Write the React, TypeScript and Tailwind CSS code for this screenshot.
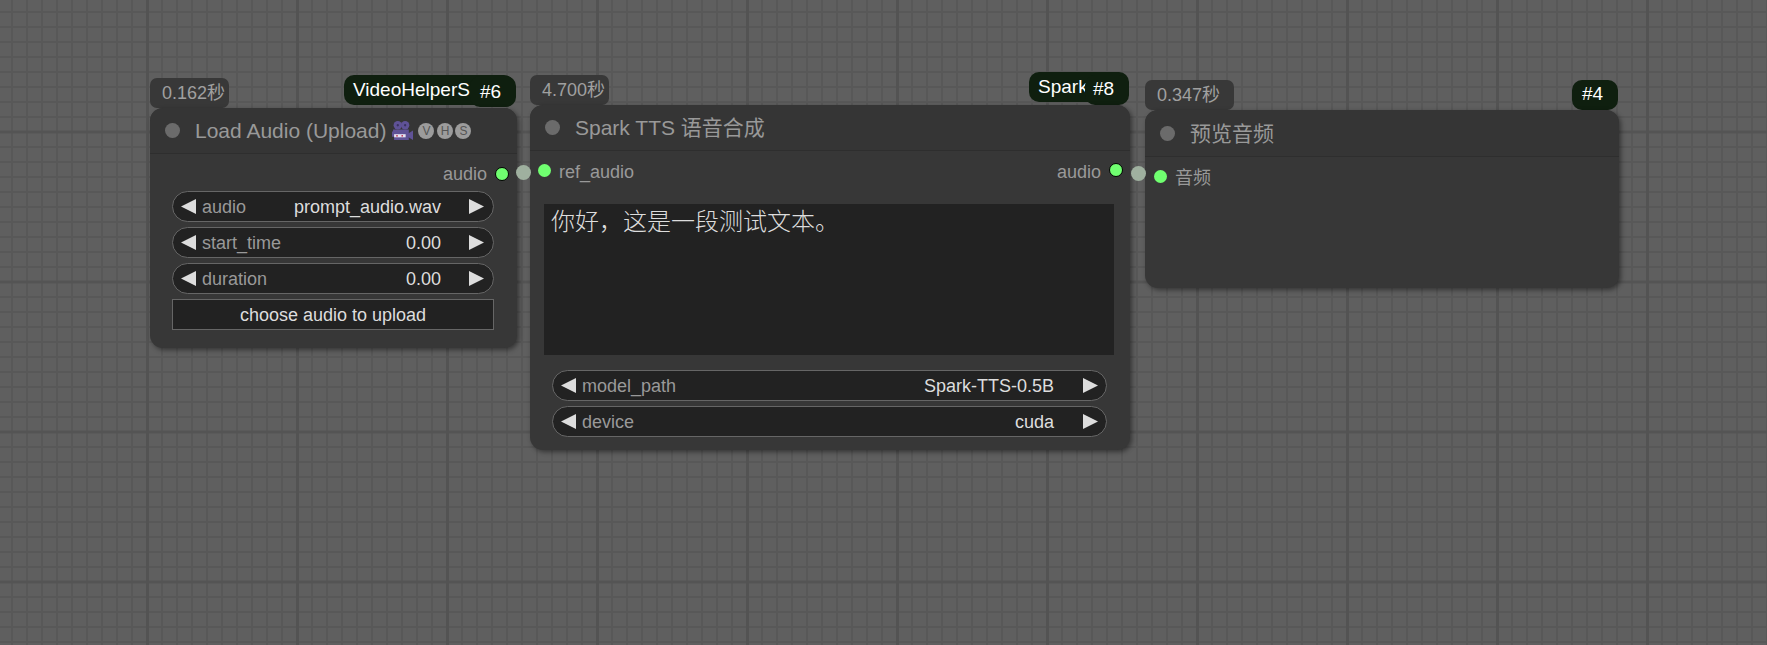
import React from "react";

const sans = "font-['Liberation_Sans','Noto_Sans_CJK_SC',sans-serif]";

function Tri({ dir }: { dir: "l" | "r" }) {
  return (
    <svg width="15" height="15" viewBox="0 0 15 15" className="shrink-0">
      <polygon points={dir === "l" ? "0,7.5 15,0 15,15" : "0,0 15,7.5 0,15"} fill="#dddddd" />
    </svg>
  );
}

function Widget({ label, value, wide }: { label: string; value: string; wide?: boolean }) {
  return (
    <div
      className={
        wide
          ? "flex h-[31px] items-center rounded-full border-[1.5px] border-[#666] bg-[#222] pl-[8px] pr-[8px] text-[18px] leading-none"
          : "flex h-[31px] items-center rounded-full border-[1.5px] border-[#666] bg-[#222] pl-[8px] pr-[9px] text-[18px] leading-none"
      }
    >
      <Tri dir="l" />
      <span className="ml-[6px] flex-1 text-[#999]">{label}</span>
      <span className={wide ? "mr-[29px] text-[#ddd]" : "mr-[28px] text-[#ddd]"}>{value}</span>
      <Tri dir="r" />
    </div>
  );
}

function Dot({ ring }: { ring?: boolean }) {
  return (
    <span
      className={
        ring
          ? "block size-[14px] shrink-0 rounded-full border-[1.5px] border-black bg-[#70ff70]"
          : "block size-[13px] shrink-0 rounded-full bg-[#70ff70]"
      }
    />
  );
}

function Node({
  className,
  title,
  headerH,
  extra,
  children,
}: {
  className: string;
  title: string;
  headerH: string;
  extra?: React.ReactNode;
  children?: React.ReactNode;
}) {
  return (
    <div className={`absolute rounded-[13px] bg-[#373737] shadow-[2px_2px_5px_rgba(0,0,0,0.45)] ${className}`}>
      <div className={`flex items-center rounded-t-[13px] border-b-[1.5px] border-[#2e2e2e] bg-[#353535] pl-[15px] ${headerH}`}>
        <span className="size-[15px] shrink-0 rounded-full bg-[#6b6b6b]" />
        <span className="ml-[15px] whitespace-nowrap text-[21px] leading-none text-[#999]">{title}</span>
        {extra}
      </div>
      {children}
    </div>
  );
}

function TimeBadge({ className, text }: { className: string; text: string }) {
  return (
    <div className={`absolute flex h-[30px] items-center rounded-[7px] bg-[#383838] pl-[12px] text-[18px] leading-none whitespace-nowrap text-[#a0a0a0] ${className}`}>
      {text}
    </div>
  );
}

function IdBadge({ className, text }: { className: string; text: string }) {
  return (
    <div className={`absolute flex items-center rounded-[10px] bg-[#0f1f0f] text-[19px] leading-none whitespace-nowrap text-white ${className}`}>
      {text}
    </div>
  );
}

function Camera() {
  return (
    <svg width="21" height="19" viewBox="0 0 20 18" className="ml-[6px] shrink-0">
      <circle cx="5.5" cy="4" r="4" fill="#5f5296" />
      <circle cx="12.5" cy="4" r="4" fill="#5f5296" />
      <circle cx="5.5" cy="4" r="1.1" fill="#38325e" />
      <circle cx="12.5" cy="4" r="1.1" fill="#38325e" />
      <path d="M1 8h15v10H2v-3H0v-5h1z" fill="#5f5296" />
      <path d="M15 12l5-3v9l-5-3z" fill="#5f5296" />
      <rect x="2" y="12.5" width="11" height="3" fill="#e6e2f0" />
      <rect x="4" y="13.3" width="1.5" height="1.5" fill="#c04060" />
      <rect x="9" y="13.3" width="1.5" height="1.5" fill="#c04060" />
    </svg>
  );
}

function Letter({ c }: { c: string }) {
  return (
    <span className="flex size-[16px] shrink-0 items-center justify-center rounded-full bg-[#9c9c9c] text-[12px] leading-none text-[#555]">
      {c}
    </span>
  );
}

export default function App() {
  return (
    <div
      className={`relative h-[645px] w-[1767px] overflow-hidden bg-[#5f5f5f] bg-[linear-gradient(to_right,#535353_3px,transparent_3px),linear-gradient(to_bottom,#545454_3px,transparent_3px),linear-gradient(to_right,#585858_2px,transparent_2px),linear-gradient(to_bottom,#585858_2px,transparent_2px)] bg-[size:150px_150px,150px_150px,15px_15px,15px_15px] bg-[position:146px_0,0_130.5px,11px_0,0_11px] ${sans}`}
    >
      <TimeBadge className="left-[150px] top-[78px] w-[79px]" text="0.162秒" />
      <IdBadge className="left-[344px] top-[75px] h-[30px] w-[170px] pb-[2px] pl-[9px]" text="VideoHelperS" />
      <IdBadge className="left-[470px] top-[76px] h-[31px] w-[46px] pl-[10px]" text="#6" />
      <Node
        className="left-[150px] top-[108px] h-[240px] w-[367px]"
        title="Load Audio (Upload)"
        headerH="h-[46px]"
        extra={
          <span className="flex items-center">
            <Camera />
            <span className="ml-[5px] flex items-center gap-[2.5px]">
              <Letter c="V" />
              <Letter c="H" />
              <Letter c="S" />
            </span>
          </span>
        }
      >
        <div className="flex h-[37px] items-center justify-end pr-[8px] pt-[2px] text-[18px] leading-none text-[#999]">
          <span className="pt-[1px]">audio</span>
          <span className="ml-[8px]">
            <Dot ring />
          </span>
        </div>
        <div className="flex flex-col gap-[5px] pl-[22px] pr-[23px]">
          <Widget label="audio" value="prompt_audio.wav" />
          <Widget label="start_time" value="0.00" />
          <Widget label="duration" value="0.00" />
          <button className="h-[31px] border-[1.5px] border-[#666] bg-[#222] text-[18px] leading-none text-[#ddd]">
            choose audio to upload
          </button>
        </div>
      </Node>

      <TimeBadge className="left-[530px] top-[75px] w-[79px]" text="4.700秒" />
      <IdBadge className="left-[1029px] top-[72px] h-[30px] w-[100px] pb-[2px] pl-[9px]" text="Spark" />
      <IdBadge className="left-[1085px] top-[75px] h-[30px] w-[44px] pb-[3px] pl-[8px]" text="#8" />
      <Node className="left-[530px] top-[105px] h-[345px] w-[600px]" title="Spark TTS 语音合成" headerH="h-[46px]">
        <div className="flex h-[38px] items-center justify-between pl-[8px] pr-[7px] text-[18px] leading-none text-[#999]">
          <span className="flex items-center gap-[8px]">
            <Dot />
            <span className="pt-[4px]">ref_audio</span>
          </span>
          <span className="flex items-center gap-[8px]">
            <span className="pt-[4px]">audio</span>
            <Dot ring />
          </span>
        </div>
        <div className="ml-[14px] mr-[16px] mt-[15px] h-[151px] bg-[#222] px-[7px] py-[1px] font-['Noto_Sans_CJK_SC',sans-serif] text-[24px] font-light leading-[30px] text-[#ddd]">
          你好，这是一段测试文本。
        </div>
        <div className="mt-[15px] flex flex-col gap-[5px] pl-[22px] pr-[23px]">
          <Widget wide label="model_path" value="Spark-TTS-0.5B" />
          <Widget wide label="device" value="cuda" />
        </div>
      </Node>

      <TimeBadge className="left-[1145px] top-[80px] w-[89px]" text="0.347秒" />
      <IdBadge className="left-[1572px] top-[80px] h-[30px] w-[46px] pb-[3px] pl-[10px]" text="#4" />
      <Node className="left-[1145px] top-[110px] h-[178px] w-[474px]" title="预览音频" headerH="h-[47px]">
        <div className="flex h-[38px] items-center gap-[8px] pl-[9px] text-[18px] leading-none text-[#999]">
          <Dot />
          <span className="pt-[4px]">音频</span>
        </div>
      </Node>

      <span className="absolute left-[515.5px] top-[164.5px] size-[15px] rounded-full bg-[#9fb09f]" />
      <span className="absolute left-[1130.5px] top-[166px] size-[15px] rounded-full bg-[#9fb09f]" />
    </div>
  );
}
